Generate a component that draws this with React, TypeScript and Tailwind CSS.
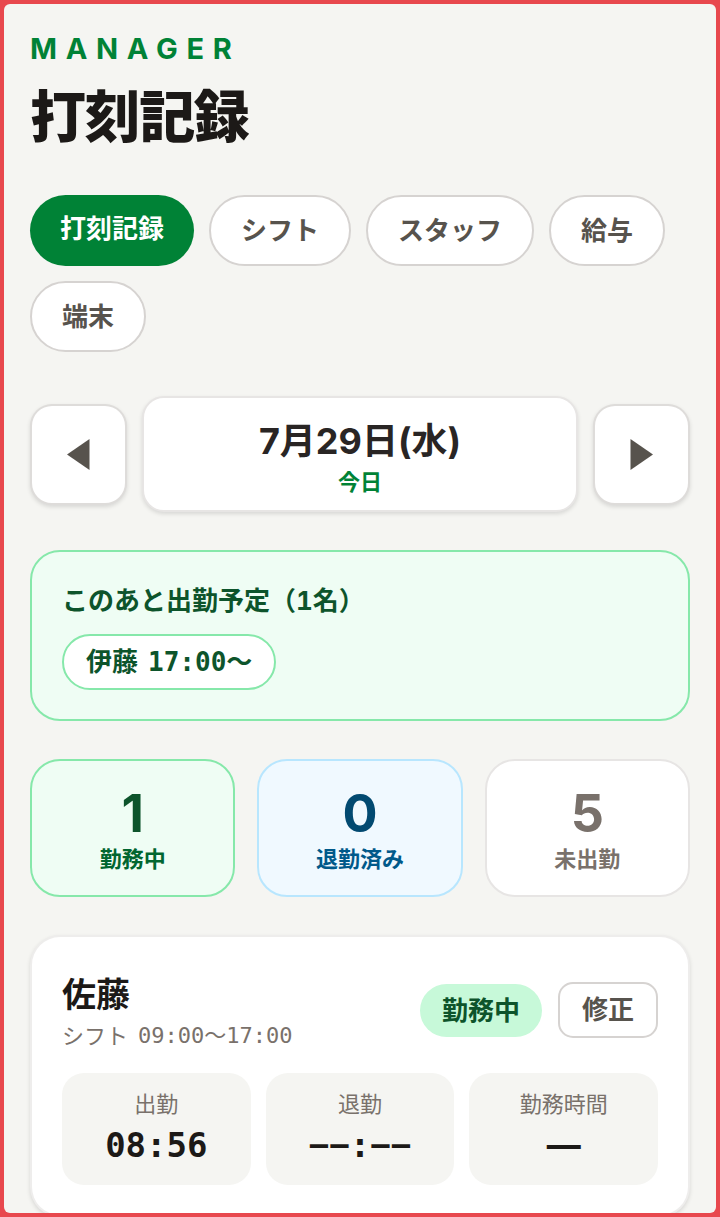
import type { ReactNode } from "react";

const tabs = ["打刻記録", "シフト", "スタッフ", "給与", "端末"];

const stats = [
  { value: 1, label: "勤務中", box: "border-[#86e8aa] bg-[#effdf4]", number: "text-green-900", text: "text-green-800" },
  { value: 0, label: "退勤済み", box: "border-sky-200 bg-sky-50", number: "text-sky-900", text: "text-sky-800" },
  { value: 5, label: "未出勤", box: "border-stone-200 bg-white", number: "text-stone-500", text: "text-stone-500" },
];

const mono = "font-['DejaVu_Sans_Mono','Noto_Sans_CJK_JP',monospace]";

function DayButton({ label, points }: { label: string; points: string }) {
  return (
    <button
      type="button"
      aria-label={label}
      className="shrink-0 rounded-[22px] border-2 border-stone-300/80 bg-white px-[35px] py-[33px] text-stone-600 shadow-[0_2px_4px_rgba(0,0,0,0.12)]"
    >
      <svg viewBox="0 0 23 31" className="h-[31px] w-[23px]" fill="currentColor" aria-hidden="true">
        <polygon points={points} />
      </svg>
    </button>
  );
}

function Tile({ label, children }: { label: string; children: ReactNode }) {
  return (
    <div className="rounded-[22px] bg-[#f5f5f2] pt-4 pb-[14px] text-center">
      <dt className="text-[22px] leading-[30px] text-stone-500">{label}</dt>
      <dd className="text-[34px] leading-[52px] font-bold text-stone-900">{children}</dd>
    </div>
  );
}

export default function App() {
  return (
    <div className="h-screen bg-[#e8484e] p-1 font-['Inter','Noto_Sans_CJK_JP',sans-serif]">
      <main className="h-full overflow-y-auto rounded-md bg-[#f5f5f2] px-[26px] pt-[26px] [scrollbar-width:none]">
        <header>
          <p className="text-[29px] leading-[37px] font-bold tracking-[0.3em] text-green-700">MANAGER</p>
          <h1 className="mt-4 text-[56px] leading-[68px] font-black tracking-tight text-stone-900">打刻記録</h1>
        </header>

        <nav className="mt-11 flex flex-wrap gap-[15px] text-[26px] leading-[37px] font-bold">
          {tabs.map((tab, i) => (
            <a
              key={tab}
              href="#"
              aria-current={i === 0 ? "page" : undefined}
              className={
                i === 0
                  ? "rounded-full bg-green-700 px-[30px] py-[15px] text-white"
                  : "rounded-full border-2 border-stone-300 bg-white px-[30px] py-[15px] text-stone-600"
              }
            >
              {tab}
            </a>
          ))}
        </nav>

        <div className="mt-11 flex items-center gap-[15px]">
          <DayButton label="前の日" points="0,15.5 22.5,0 22.5,31" />
          <div className="flex-1 rounded-[22px] border-2 border-stone-200 bg-white pt-4 pb-[14px] text-center shadow-[0_2px_4px_rgba(0,0,0,0.12)]">
            <p className="text-[36px] leading-[54px] font-bold text-stone-800">7月29日(水)</p>
            <p className="text-[22px] leading-[28px] font-bold text-green-700">今日</p>
          </div>
          <DayButton label="次の日" points="23,15.5 0.5,0 0.5,31" />
        </div>

        <section className="mt-[38px] rounded-[30px] border-2 border-[#86e8aa] bg-[#effdf4] px-[30px] pt-[30px] pb-[29px] text-[26px] font-bold text-green-900">
          <h2 className="leading-[37px] tabular-nums">このあと出勤予定（1名）</h2>
          <ul className="mt-[15px] flex flex-wrap gap-[15px]">
            <li className="flex gap-[10px] rounded-full border-2 border-[#86e8aa] bg-white px-[22px] py-[7px] leading-[38px]">
              <span>伊藤</span>
              <span className={mono}>17:00〜</span>
            </li>
          </ul>
        </section>

        <section className="mt-[38px] grid grid-cols-3 gap-[22px]">
          {stats.map((s) => (
            <div key={s.label} className={`rounded-[30px] border-2 pt-[23px] pb-[21px] text-center font-bold ${s.box}`}>
              <p className={`text-[52px] leading-[60px] ${s.number}`}>{s.value}</p>
              <p className={`text-[22px] leading-[30px] ${s.text}`}>{s.label}</p>
            </div>
          ))}
        </section>

        <article className="mt-[38px] rounded-[30px] border-2 border-stone-200/70 bg-white px-[30px] pt-8 pb-[30px] shadow-[0_2px_4px_rgba(0,0,0,0.12)]">
          <div className="flex items-center gap-4">
            <div className="flex-1">
              <h2 className="text-[34px] leading-[52px] font-bold text-stone-900">佐藤</h2>
              <p className="flex gap-[10px] text-[22px] leading-[30px] text-stone-500">
                <span>シフト</span>
                <span className={mono}>09:00〜17:00</span>
              </p>
            </div>
            <span className="rounded-full bg-[#c7f9d9] px-[22px] py-2 text-[26px] leading-[37px] font-bold text-green-900">
              勤務中
            </span>
            <button
              type="button"
              className="rounded-[15px] border-2 border-stone-300 bg-white px-[22px] py-[7px] text-[26px] leading-[38px] font-bold text-stone-600"
            >
              修正
            </button>
          </div>
          <dl className="mt-[22px] grid grid-cols-3 gap-[15px]">
            <Tile label="出勤">
              <span className={mono}>08:56</span>
            </Tile>
            <Tile label="退勤">
              <span className={mono}>−−:−−</span>
            </Tile>
            <Tile label="勤務時間">—</Tile>
          </dl>
        </article>
      </main>
    </div>
  );
}
